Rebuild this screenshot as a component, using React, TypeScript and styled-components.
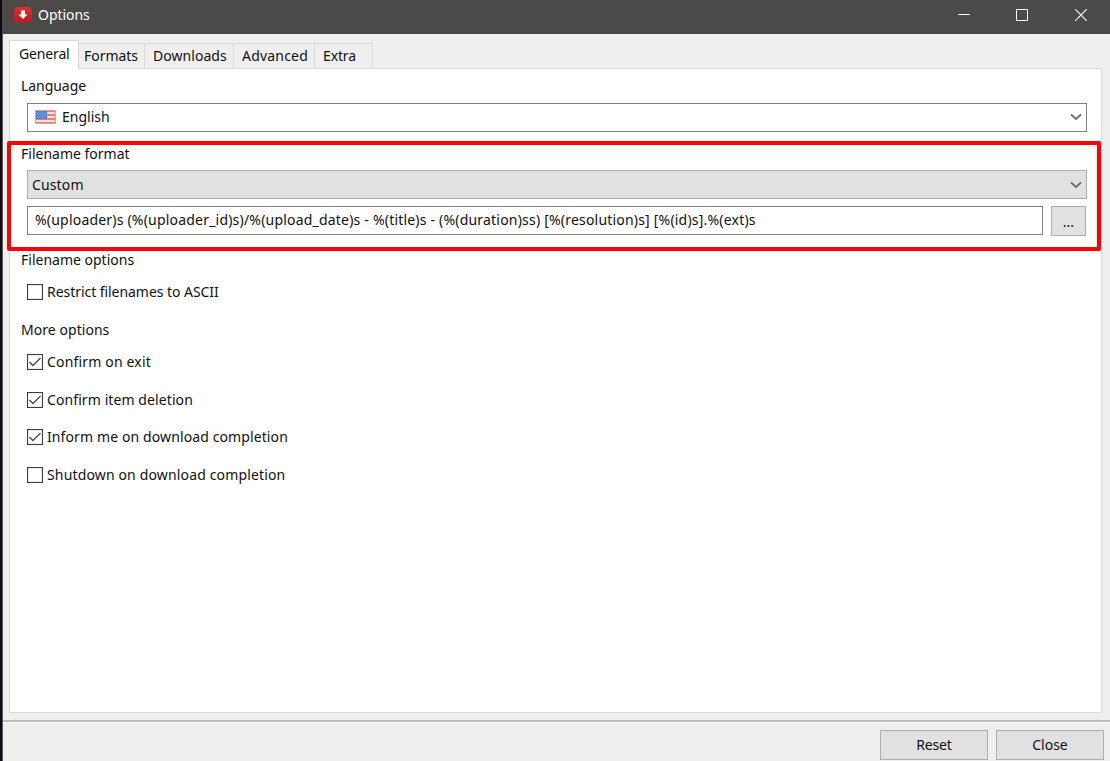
import React from 'react';
import styled, { createGlobalStyle } from 'styled-components';

const GlobalStyle = createGlobalStyle`
  *, *::after { box-sizing: border-box; }
  body { margin: 0; overflow: hidden; }
  button { font: inherit; color: inherit; }
`;

const Window = styled.div`
  width: 1110px;
  height: 761px;
  display: flex;
  flex-direction: column;
  border-left: 2px solid #0c0c12;
  box-shadow: inset 1px 0 #5b5a58;
  background: #efefef;
  color: #111;
  font: 14px/20px 'Noto Sans', 'Open Sans', sans-serif;
`;

const Text = styled.span<{ $spacing?: number }>`
  white-space: pre;
  letter-spacing: ${(p) => p.$spacing ?? 0}px;
`;

const TitleBar = styled.header`
  height: 34px;
  flex: none;
  display: flex;
  align-items: center;
  padding: 0 0 4px 12px;
  background: #4b4a48;
  color: #fff;
`;

const TitleText = styled.h1`
  flex: 1;
  margin: 0 0 0 6px;
  font-size: 14px;
  font-weight: 400;
`;

const WindowControls = styled.div`
  display: flex;
  svg { display: block; }
`;

const ControlButton = styled.button`
  width: 58.5px;
  height: 30px;
  padding: 0;
  border: 0;
  background: none;
  display: grid;
  place-items: center;
`;

const TabList = styled.nav`
  height: 34px;
  flex: none;
  display: flex;
  align-items: flex-end;
  padding-left: 7px;
`;

const Tab = styled.button<{ $width: number; $indent: number; $active?: boolean }>`
  width: ${(p) => p.$width}px;
  height: ${(p) => (p.$active ? 29 : 25)}px;
  flex: none;
  display: flex;
  align-items: center;
  padding: 0 0 ${(p) => (p.$active ? 2 : 0)}px ${(p) => p.$indent}px;
  border: 1px solid #dadada;
  border-bottom: 0;
  border-left-width: ${(p) => (p.$active ? 1 : 0)}px;
  background: ${(p) => (p.$active ? '#fff' : '#efefef')};
  margin-bottom: ${(p) => (p.$active ? -1 : 0)}px;
  position: relative;
  z-index: ${(p) => (p.$active ? 1 : 0)};
`;

const Panel = styled.main`
  height: 645px;
  flex: none;
  margin: 0 8px 0 7px;
  border: 1px solid #dadada;
  background: #fff;
  padding: 7px 14px 0 11px;
`;

const Heading = styled.h2`
  margin: 0;
  height: 20px;
  font-size: 14px;
  font-weight: 400;
  line-height: 20px;
`;

const Section = styled.section<{ $height: number }>`
  height: ${(p) => p.$height}px;
`;

const Field = styled.div<{ $filled?: boolean }>`
  height: 29px;
  flex: 1;
  display: flex;
  align-items: center;
  padding: 0 4px ${(p) => (p.$filled ? 0 : 2)}px;
  border: 1px solid ${(p) => (p.$filled ? '#adadad' : '#828282')};
  background: ${(p) => (p.$filled ? '#e1e1e1' : '#fff')};
`;

const FieldRow = styled.div<{ $top: number; $right?: number }>`
  display: flex;
  gap: 8px;
  margin: ${(p) => p.$top}px ${(p) => p.$right ?? 0}px 0 6px;
`;

const FieldValue = styled.div<{ $inset?: number }>`
  flex: 1;
  display: flex;
  align-items: center;
  gap: 6px;
  padding-left: ${(p) => p.$inset ?? 0}px;
`;

const FormatGroup = styled(Section)`
  position: relative;
  &::after {
    content: '';
    position: absolute;
    left: -14px;
    right: -14px;
    top: -3px;
    height: 110px;
    border: 4px solid #fe0000;
    border-radius: 2px;
    pointer-events: none;
  }
`;

const PushButton = styled.button<{ $width: number }>`
  width: ${(p) => p.$width}px;
  height: 30px;
  flex: none;
  padding: 0;
  border: 1px solid #adadad;
  background: #e1e1e1;
`;

const BrowseButton = styled(PushButton)`
  padding-top: 2px;
`;

const CheckList = styled.div`
  display: flex;
  flex-direction: column;
  gap: 17.5px;
  padding: 12px 0 0 6px;
`;

const CheckRow = styled.label`
  height: 20px;
  display: flex;
  align-items: center;
  gap: 4px;
`;

const Footer = styled.footer`
  flex: 1;
  display: flex;
  justify-content: flex-end;
  gap: 8px;
  margin: 7px 0 0 1px;
  padding: 8px 6px 0 0;
  border-top: 2px solid #bcbcbc;
  box-shadow: inset 0 1px #fff;
`;

const AppLogo = () => (
  <svg width="18" height="16" viewBox="0 0 18 16">
    <defs>
      <linearGradient id="red" x2="0" y2="1">
        <stop stopColor="#dc3035" />
        <stop offset="1" stopColor="#b51c20" />
      </linearGradient>
    </defs>
    <rect width="18" height="15.5" rx="4" fill="url(#red)" />
    <path d="M7 3.5h4v4h2.5L9 12 4.5 7.5H7z" fill="#f3f6f8" />
  </svg>
);

const Flag = () => (
  <svg width="21" height="14" viewBox="0 0 21 14">
    <rect width="21" height="14" fill="#f4ded9" />
    {[0, 4, 8, 12].map((y) => (
      <rect key={y} y={y} width="21" height="2" fill="#e58078" />
    ))}
    <rect x=".5" y=".5" width="20" height="13" fill="none" stroke="#dba592" />
    <rect x="1" y="1" width="11" height="8" fill="#4a80e0" />
    <path d="M2 3h9M3 5h9M2 7h9" stroke="#a9c5f3" strokeDasharray="1 1.5" />
  </svg>
);

const Chevron = () => (
  <svg width="12" height="8" viewBox="0 0 12 8">
    <path d="M1 1.5 6 6l5-4.5" fill="none" stroke="#6b6b6b" strokeWidth="1.7" />
  </svg>
);

const CheckBox = ({ checked }: { checked?: boolean }) => (
  <svg width="16" height="16" viewBox="0 0 16 16">
    <rect x=".5" y=".5" width="15" height="15" fill="#fff" stroke="#3d3d3d" strokeWidth="1.2" />
    {checked && <path d="m2.5 8 3.5 3.5L13.5 4" fill="none" stroke="#484848" strokeWidth="1.3" />}
  </svg>
);

const tabs = [
  { label: 'General', width: 70, indent: 9, spacing: -0.15 },
  { label: 'Formats', width: 66, indent: 5, spacing: -0.03 },
  { label: 'Downloads', width: 89, indent: 8, spacing: 0.05 },
  { label: 'Advanced', width: 81, indent: 8, spacing: 0.2 },
  { label: 'Extra', width: 58, indent: 8, spacing: -0.15 },
];

const options = [
  { label: 'Confirm on exit', checked: true, spacing: 0.17 },
  { label: 'Confirm item deletion', checked: true, spacing: 0.09 },
  { label: 'Inform me on download completion', checked: true, spacing: 0.11 },
  { label: 'Shutdown on download completion', checked: false, spacing: 0.15 },
];

export default function App() {
  return (
    <>
      <GlobalStyle />
      <Window>
        <TitleBar>
          <AppLogo />
          <TitleText><Text $spacing={-0.05}>Options</Text></TitleText>
          <WindowControls>
            <ControlButton aria-label="Minimize">
              <svg width="12" height="12"><path d="M0 5.5h12" stroke="#fff" /></svg>
            </ControlButton>
            <ControlButton aria-label="Maximize">
              <svg width="12" height="12"><path d="M.5.5h11v11H.5z" fill="none" stroke="#fff" /></svg>
            </ControlButton>
            <ControlButton aria-label="Close">
              <svg width="12" height="12"><path d="m.3.3 11.4 11.4M11.7.3.3 11.7" stroke="#fff" strokeWidth="1.2" /></svg>
            </ControlButton>
          </WindowControls>
        </TitleBar>
        <TabList>
          {tabs.map((t, i) => (
            <Tab key={t.label} $width={t.width} $indent={t.indent} $active={i === 0}>
              <Text $spacing={t.spacing}>{t.label}</Text>
            </Tab>
          ))}
        </TabList>
        <Panel>
          <Section $height={68}>
            <Heading><Text $spacing={-0.05}>Language</Text></Heading>
            <FieldRow $top={7}>
              <Field>
                <FieldValue $inset={3}><Flag /><Text>English</Text></FieldValue>
                <Chevron />
              </Field>
            </FieldRow>
          </Section>
          <FormatGroup $height={106}>
            <Heading><Text>Filename format</Text></Heading>
            <FieldRow $top={6}>
              <Field $filled>
                <FieldValue><Text $spacing={0.13}>Custom</Text></FieldValue>
                <Chevron />
              </Field>
            </FieldRow>
            <FieldRow $top={7} $right={1}>
              <Field>
                <FieldValue $inset={3}>
                  <Text $spacing={0.2}>%(uploader)s (%(uploader_id)s)/%(upload_date)s - %(title)s - (%(duration)ss) [%(resolution)s] [%(id)s].%(ext)s</Text>
                </FieldValue>
              </Field>
              <BrowseButton $width={35}>...</BrowseButton>
            </FieldRow>
          </FormatGroup>
          <Section $height={70}>
            <Heading><Text>Filename options</Text></Heading>
            <CheckList>
              <CheckRow><CheckBox /><Text $spacing={-0.05}>Restrict filenames to ASCII</Text></CheckRow>
            </CheckList>
          </Section>
          <Section $height={180}>
            <Heading><Text $spacing={0.05}>More options</Text></Heading>
            <CheckList>
              {options.map((o) => (
                <CheckRow key={o.label}>
                  <CheckBox checked={o.checked} />
                  <Text $spacing={o.spacing}>{o.label}</Text>
                </CheckRow>
              ))}
            </CheckList>
          </Section>
        </Panel>
        <Footer>
          <PushButton $width={108}><Text $spacing={-0.15}>Reset</Text></PushButton>
          <PushButton $width={108}><Text>Close</Text></PushButton>
        </Footer>
      </Window>
    </>
  );
}
